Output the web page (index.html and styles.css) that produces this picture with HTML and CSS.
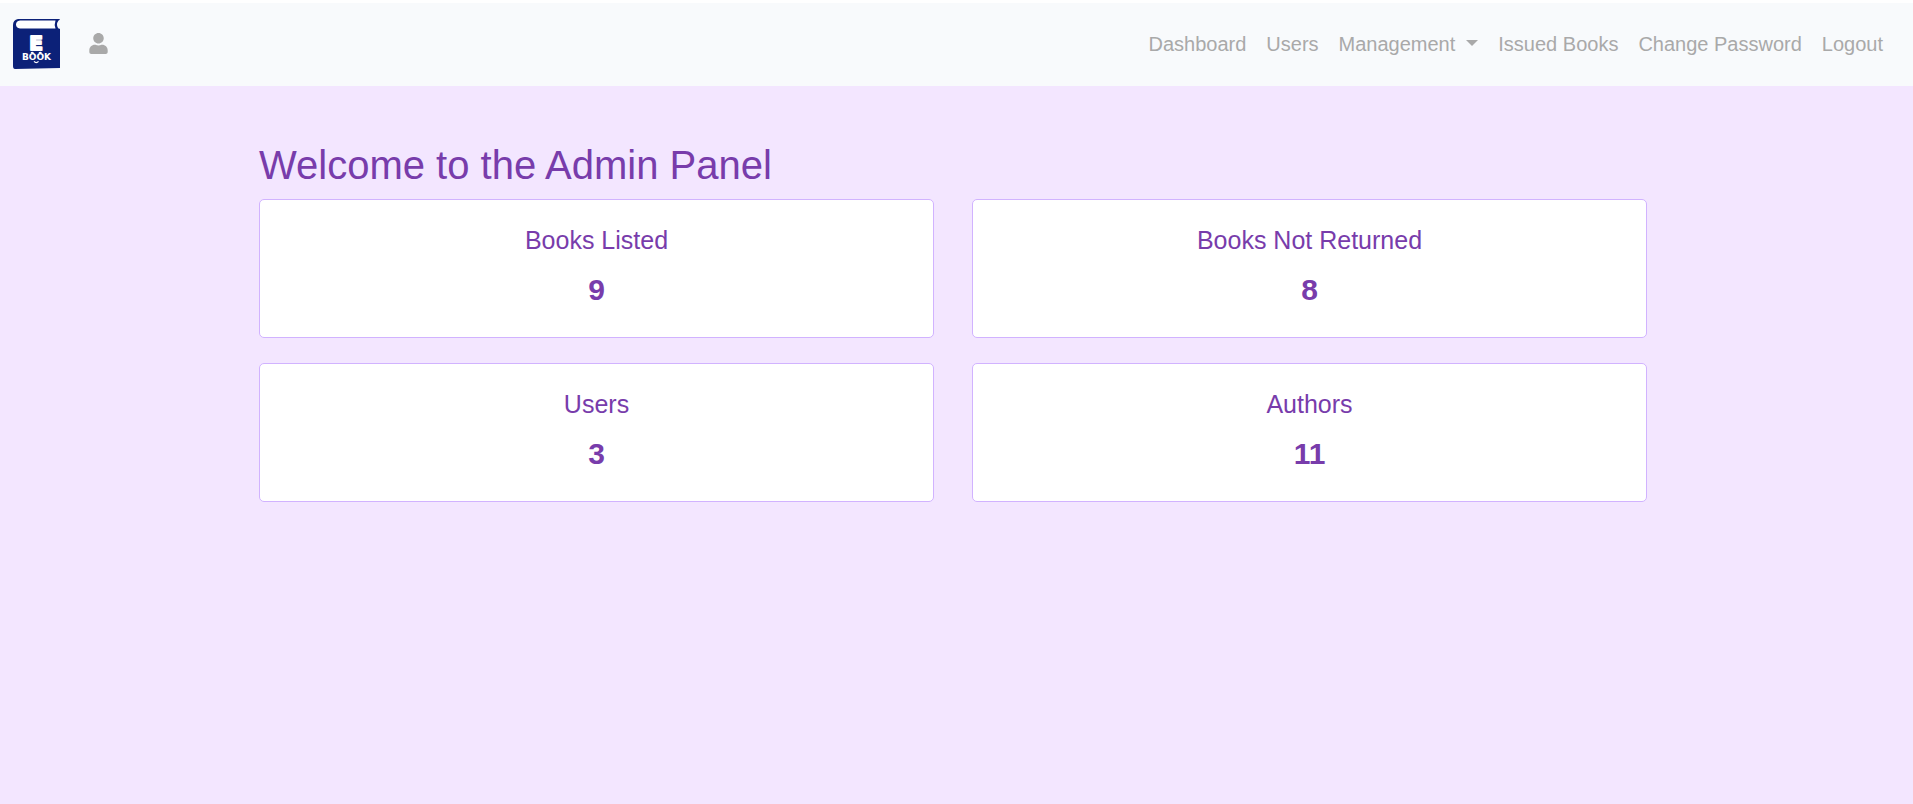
FILE: index.html
```html
<!DOCTYPE html>
<html lang="en">
<head>
<meta charset="utf-8">
<meta name="viewport" content="width=device-width, initial-scale=1">
<title>Admin Panel</title>
<link rel="stylesheet" href="styles.css">
</head>
<body>
<header class="navbar">
  <a class="brand" href="#" aria-label="E-Book home">
    <svg class="logo" viewBox="0 0 47 50" aria-hidden="true">
      <path fill="#0c2178" d="M5 0H47L46 1.500Q43.500 5 46 9.500H47V49L2 50Q0 50 0 47V6Q0 1 5 0Z"/>
      <path fill="#fff" d="M7 1.500H42.500Q41 5.500 42.500 9.500H7Q3 9 3 5.500Q3 2 7 1.500Z"/>
      <path fill="#f8fafc" d="M47 1.500H45.500Q42.500 5.500 45.500 9.500H47Z"/>
      <text class="logo-letter" x="23" y="30.500" text-anchor="middle">E</text>
      <path fill="none" stroke="#fff" stroke-width="1.200" d="M18 34Q19.200 32.800 20.500 34M26 34Q27.300 32.800 28.500 34M21 42.300Q23.300 44.800 25.500 42.300"/>
      <text class="logo-text" x="23.500" y="41" text-anchor="middle">BOOK</text>
    </svg>
  </a>
  <a class="profile" href="#" aria-label="Profile">
    <svg class="user-icon" viewBox="0 0 448 512" aria-hidden="true"><path fill="currentColor" d="M224 256c70.700 0 128-57.300 128-128S294.700 0 224 0 96 57.300 96 128s57.300 128 128 128zm89.600 32h-16.700c-22.200 10.200-46.900 16-72.900 16s-50.600-5.800-72.900-16h-16.700C60.200 288 0 348.200 0 422.400V464c0 26.500 21.500 48 48 48h352c26.500 0 48-21.500 48-48v-41.600c0-74.200-60.200-134.400-134.400-134.400z"/></svg>
  </a>
  <nav class="menu">
    <a href="#">Dashboard</a>
    <a href="#">Users</a>
    <a class="dropdown" href="#">Management</a>
    <a href="#">Issued Books</a>
    <a href="#">Change Password</a>
    <a href="#">Logout</a>
  </nav>
</header>
<main class="page">
  <div class="container">
    <h1 class="heading">Welcome to the Admin Panel</h1>
    <div class="cards">
      <section class="card"><h2 class="card-title">Books Listed</h2><p class="card-value">9</p></section>
      <section class="card"><h2 class="card-title">Books Not Returned</h2><p class="card-value">8</p></section>
      <section class="card"><h2 class="card-title">Users</h2><p class="card-value">3</p></section>
      <section class="card"><h2 class="card-title">Authors</h2><p class="card-value">11</p></section>
    </div>
  </div>
</main>
</body>
</html>
```
FILE: styles.css
```css
* { box-sizing: border-box; }

body {
  display: flex;
  flex-direction: column;
  min-height: 100vh;
  margin: 0;
  border-top: 3px solid #fff;
  background: #f3e6ff;
  color: #783cab;
  font-family: Arial, "Liberation Sans", sans-serif;
  font-size: 20px;
  line-height: 30px;
}

.navbar {
  display: flex;
  align-items: center;
  padding: 16px 20px 17px 13px;
  background: #f8fafc;
}

.brand { display: flex; }

.logo { width: 47px; height: 50px; }

.logo-letter,
.logo-text {
  fill: #fff;
  font-family: "DejaVu Sans", sans-serif;
  font-weight: 700;
}

.logo-letter {
  stroke: #fff;
  stroke-width: 2px;
  stroke-linejoin: round;
  font-size: 20px;
}

.logo-text { font-size: 9px; }

.profile {
  display: flex;
  margin-left: 29px;
  color: #a9a9a9;
}

.user-icon {
  width: 19px;
  height: 21px;
  margin-bottom: 2px;
}

.menu {
  display: flex;
  flex-wrap: wrap;
  margin-left: auto;
}

.menu a {
  padding: 0 10px;
  color: #a9a9a9;
  text-decoration: none;
}

.dropdown::after {
  content: "";
  display: inline-block;
  margin-left: 11px;
  border: 6px solid transparent;
  border-top-color: currentColor;
  border-bottom: 0;
  vertical-align: 5px;
}

.page {
  flex: 1;
  padding: 55px 27px 40px 20px;
}

.container {
  max-width: 1388px;
  margin: 0 auto;
}

.heading {
  margin: 0 0 10px;
  font-size: 40px;
  font-weight: 400;
  line-height: 48px;
}

.cards {
  display: grid;
  grid-template-columns: repeat(2, 1fr);
  gap: 25px 38px;
}

.card {
  padding: 25px;
  border: 1px solid #d1b3ff;
  border-radius: 5px;
  background: #fff;
  text-align: center;
}

.card-title {
  margin: 0 0 12px;
  font-size: 25px;
  font-weight: 400;
  line-height: 30px;
}

.card-value {
  margin: 0;
  font-size: 30px;
  font-weight: 700;
  line-height: 45px;
}
```
